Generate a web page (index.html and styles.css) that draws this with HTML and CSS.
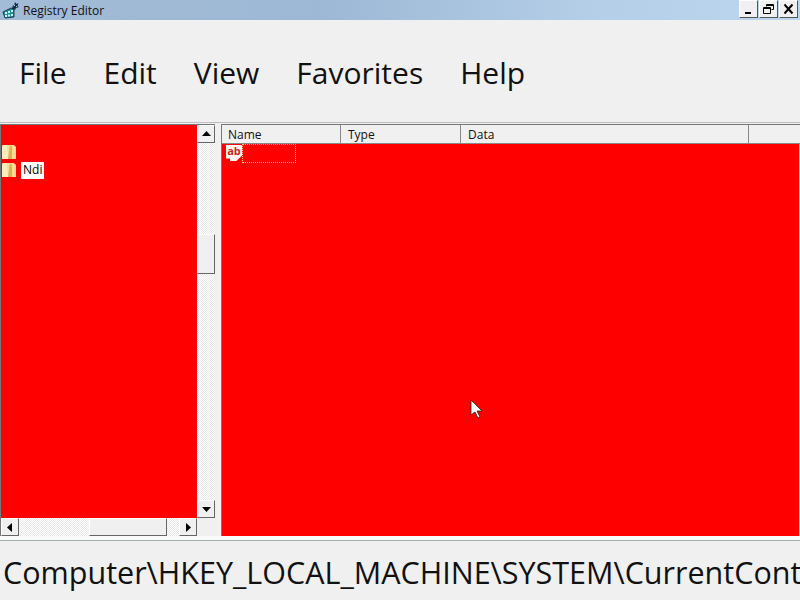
FILE: index.html
```html
<!DOCTYPE html>
<html lang="en">
<head>
<meta charset="utf-8">
<title>Registry Editor</title>
<link rel="stylesheet" href="styles.css">
</head>
<body>
<div class="window">
  <header class="titlebar">
    <svg class="appicon" width="18" height="18" viewBox="0 0 18 18">
      <path d="M1 11l8-4 3 1v8l-9 1z" fill="#1f8f9c" stroke="#123" stroke-width=".8"/>
      <path d="M3 11h2v2H3zM6 10h2v2H6zM9 9h2v2H9zM3 14h2v2H3zM6 13.500h2v2H6zM9 13h2v2H9z" fill="#c8f4ee"/>
      <path d="M10 8l1-4 1 1 1-4 1.500 2 2-1-1 3 1.500 1-3 1-1 2z" fill="#1c2a44"/>
      <path d="M12 5l1-1M14 6l1-1" stroke="#8fd8e0"/>
    </svg>
    <span class="title">Registry Editor</span>
    <div class="winbtns">
      <div class="winbtn"><svg width="13" height="12" viewBox="0 0 13 12"><path d="M3 9h6v2H3z" fill="#000"/></svg></div>
      <div class="winbtn"><svg width="13" height="12" viewBox="0 0 13 12"><path d="M4.500 1.500h7v5h-2M4.500 3.500V1.500M1.500 4.500h7v6h-7zM1.500 5.500h7M4.500 2.500h7" fill="none" stroke="#000"/></svg></div>
      <div class="winbtn"><svg width="13" height="12" viewBox="0 0 13 12"><path d="M2.500 1.500l8 9M10.500 1.500l-8 9" fill="none" stroke="#000" stroke-width="2"/></svg></div>
    </div>
  </header>
  <nav class="menubar">
    <span>File</span><span>Edit</span><span>View</span><span>Favorites</span><span>Help</span>
  </nav>
  <main class="panes">
    <section class="tree">
      <div class="treebody">
        <div class="treearea">
          <div class="treerow"><svg class="folder" width="16" height="16" viewBox="0 0 16 16"><path d="M1 2l1-1h11l2 2v12H1z" fill="#f6dc93"/><path d="M9 1l2 2v12H7z" fill="#d8b35a"/><path d="M1 2l1-1h4l1 14H1z" fill="#fcecbd"/></svg></div>
          <div class="treerow"><svg class="folder" width="16" height="16" viewBox="0 0 16 16"><path d="M1 2l1-1h11l2 2v12H1z" fill="#f6dc93"/><path d="M9 1l2 2v12H7z" fill="#d8b35a"/><path d="M1 2l1-1h4l1 14H1z" fill="#fcecbd"/></svg><span class="treelabel">Ndi</span></div>
        </div>
        <div class="vscroll">
          <div class="sbtn"><svg width="9" height="6" viewBox="0 0 9 6"><path d="M4.500 0L9 5H0z" fill="#000"/></svg></div>
          <div class="vtrack"><div class="vthumb"></div></div>
          <div class="sbtn"><svg width="9" height="6" viewBox="0 0 9 6"><path d="M0 1h9L4.500 6z" fill="#000"/></svg></div>
        </div>
      </div>
      <div class="hscroll">
        <div class="sbtn"><svg width="6" height="9" viewBox="0 0 6 9"><path d="M5 0v9L0 4.500z" fill="#000"/></svg></div>
        <div class="htrack"><div class="hthumb"></div></div>
        <div class="sbtn"><svg width="6" height="9" viewBox="0 0 6 9"><path d="M1 0l5 4.500L1 9z" fill="#000"/></svg></div>
      </div>
    </section>
    <section class="list">
      <div class="listhead">
        <div class="col col-name">Name</div>
        <div class="col col-type">Type</div>
        <div class="col col-data">Data</div>
        <div class="col col-rest"></div>
      </div>
      <div class="listbody">
        <div class="listrow">
          <div class="abicon">ab</div>
          <div class="focusbox"></div>
        </div>
        <svg class="cursor" width="14" height="20" viewBox="0 0 14 20"><path d="M1 1v15l4-3 3 6 2-1-3-6h5z" fill="#fff" stroke="#222" stroke-width=".8"/></svg>
      </div>
    </section>
  </main>
  <footer class="statusbar">Computer\HKEY_LOCAL_MACHINE\SYSTEM\CurrentControlSet</footer>
</div>
</body>
</html>
```
FILE: styles.css
```css
* { box-sizing: border-box; }
html, body { margin: 0; padding: 0; }
body { width: 800px; height: 600px; overflow: hidden; background: #f0f0f0; font-family: "Open Sans", "Noto Sans", sans-serif; color: #000; }
.window { width: 800px; height: 600px; display: flex; flex-direction: column; overflow: hidden; }
.titlebar { height: 20px; flex: none; display: flex; align-items: center; padding-left: 2px; background: linear-gradient(90deg, #a2bbd6 0%, #9db8d5 40%, #b5cfe8 75%, #bcd6ee 100%); }
.appicon { flex: none; }
.title { margin-left: 3px; font-size: 12px; color: #111; }
.winbtns { margin-left: auto; display: flex; gap: 1px; align-self: flex-start; margin-right: 2px; }
.winbtn { width: 19px; height: 18px; background: #f0f0f0; border: 1px solid; border-color: #fff #555 #555 #fff; display: flex; align-items: center; justify-content: center; }
.menubar { height: 103px; flex: none; display: flex; align-items: center; gap: 37px; padding: 3px 0 0 19px; font-size: 30px; color: #111; background: #f0f0f0; border-bottom: 1px solid #bdbdbd; }
.panes { height: 417px; flex: none; display: flex; padding-top: 1px; gap: 6px; border-bottom: 4px solid #fafafa; }
.tree { width: 215px; flex: none; display: flex; flex-direction: column; border-left: 1px solid #777; border-top: 1px solid #777; }
.treebody { flex: 1; display: flex; min-height: 0; }
.treearea { flex: 1; background: #ff0000; padding-top: 19px; display: flex; flex-direction: column; gap: 2px; }
.treerow { height: 16px; display: flex; align-items: center; }
.folder { flex: none; }
.treelabel { background: #fff; font-size: 12px; line-height: 16px; height: 17px; padding: 0 2px; margin-left: 4px; }
.vscroll { width: 18px; flex: none; display: flex; flex-direction: column; background: repeating-conic-gradient(#fff 0 25%, #e8e8e8 0 50%) 0 0 / 2px 2px; }
.sbtn { width: 18px; height: 18px; flex: none; background: #f0f0f0; border: 1px solid; border-color: #fff #666 #666 #fff; display: flex; align-items: center; justify-content: center; }
.vtrack { flex: 1; padding-top: 91px; }
.vthumb { height: 40px; background: #f0f0f0; border: 1px solid; border-color: #fff #666 #666 #fff; }
.hscroll { height: 18px; flex: none; display: flex; background: repeating-conic-gradient(#fff 0 25%, #e8e8e8 0 50%) 0 0 / 2px 2px; width: 196px; }
.htrack { flex: 1; padding-left: 70px; padding-right: 12px; }
.hthumb { height: 100%; background: #f0f0f0; border: 1px solid; border-color: #fff #666 #666 #fff; }
.list { width: 579px; flex: none; display: flex; flex-direction: column; border-left: 1px solid #777; border-top: 1px solid #777; }
.listhead { height: 19px; flex: none; display: flex; font-size: 12px; line-height: 20px; background: #f0f0f0; border-bottom: 1px solid #888; }
.col { border-right: 1px solid #888; padding-left: 7px; color: #111; }
.col-name { width: 119px; padding-left: 6px; }
.col-type { width: 120px; }
.col-data { width: 288px; }
.col-rest { flex: 1; border-right: 0; }
.listbody { flex: 1; background: #ff0000; position: relative; margin-right: 1px; }
.listrow { display: flex; height: 18px; padding-left: 4px; align-items: flex-start; }
.abicon { width: 16px; height: 16px; margin-top: 1px; background: #fff4f0; color: #d0281e; font-size: 11px; font-weight: 700; line-height: 12px; text-align: center; clip-path: polygon(0 0, 100% 0, 100% 65%, 65% 100%, 25% 100%, 25% 85%, 0 85%); }
.focusbox { width: 54px; height: 19px; border: 1px dotted #f5d58c; }
.cursor { position: absolute; left: 248px; top: 255px; }
.statusbar { flex: 1; border-top: 1px solid #a0b0a8; padding: 9px 0 0 3px; font-size: 30.500px; line-height: 44px; white-space: nowrap; overflow: hidden; color: #111; background: #f0f0f0; }
```
